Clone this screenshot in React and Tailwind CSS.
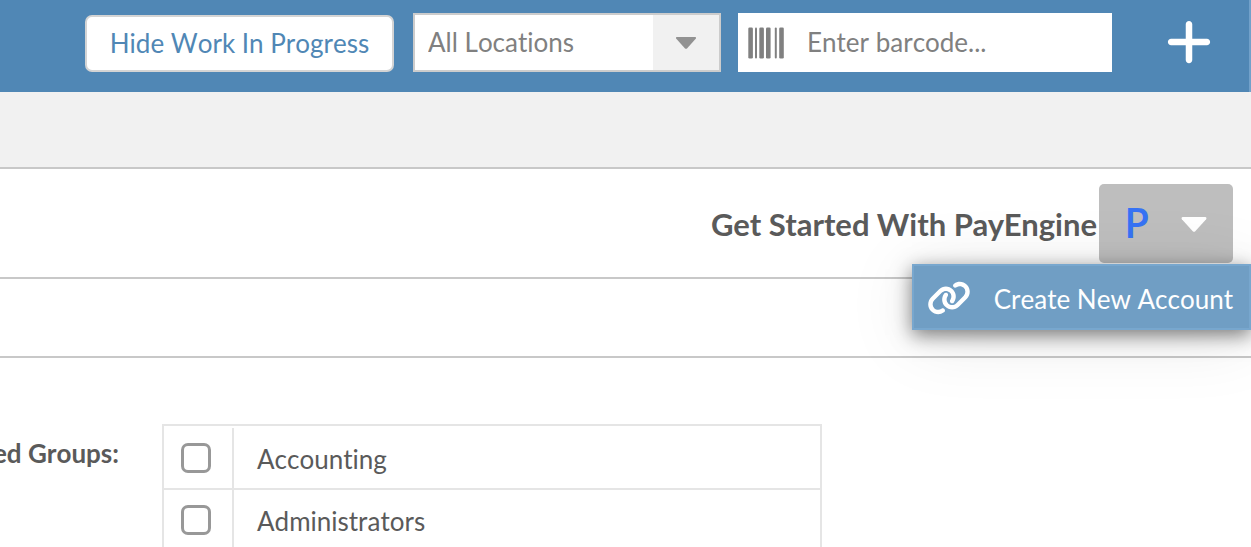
import { useState } from 'react';
import { FaLink, FaPlus } from 'react-icons/fa6';

const locations = ['All Locations'];
const groups = ['Accounting', 'Administrators'];

const Caret = ({ className }) => (
  <svg viewBox="0 0 20 12" className={className} fill="currentColor" aria-hidden="true">
    <path d="M1 0h18c.9 0 1.300 1 .7 1.700L11 11.400c-.6.600-1.400.6-2 0L.3 1.700C-.3 1 .1 0 1 0z" />
  </svg>
);

const BarcodeIcon = ({ className }) => (
  <svg viewBox="0 0 36 32" className={className} fill="currentColor" aria-hidden="true">
    <rect x="0.300" y="0.500" width="4.600" height="31" rx="1.300" />
    <rect x="7" y="0.500" width="2" height="31" rx="1" />
    <rect x="11.300" y="0.500" width="4.600" height="31" rx="1.300" />
    <rect x="18" y="0.500" width="4.600" height="31" rx="1.300" />
    <rect x="26.800" y="0.500" width="2" height="31" rx="1" />
    <rect x="31.200" y="0.500" width="4.600" height="31" rx="1.300" />
  </svg>
);

const TopBar = ({ location, onLocationChange }) => (
  <header className="flex h-[92px] shrink-0 items-start justify-end border-r-2 border-[#72a1ca] bg-[#5087b5] pt-[13px] pr-[34px]">
    <button
      type="button"
      className="mt-[2px] mr-[19px] h-[57px] w-[309px] rounded-[7px] border-2 border-[#d4d4d4] bg-white pb-[2px] text-[#5087b5]"
    >
      Hide Work In Progress
    </button>

    <div className="relative mr-[17px] h-[59px] w-[308px]">
      <select
        aria-label="Location"
        value={location}
        onChange={(event) => onLocationChange(event.target.value)}
        className="h-full w-full appearance-none border-2 border-[#ccc] bg-white pb-[2px] pl-[13px] text-[#808080] outline-none"
      >
        {locations.map((item) => (
          <option key={item}>{item}</option>
        ))}
      </select>
      <span className="pointer-events-none absolute inset-y-[2px] right-[2px] flex w-[66px] items-center justify-center bg-[#f1f1f1] text-[#929292]">
        <Caret className="h-3 w-5" />
      </span>
    </div>

    <label className="flex h-[59px] w-[374px] items-center bg-white px-[10px] text-[#808080]">
      <BarcodeIcon className="h-8 w-9 shrink-0" />
      <input
        type="text"
        aria-label="Barcode"
        placeholder="Enter barcode..."
        className="ml-[23px] h-full w-full min-w-0 pb-[2px] outline-none placeholder:text-[#808080]"
      />
    </label>

    <button type="button" aria-label="Add" className="ml-[51px] flex h-[58px] items-center text-white">
      <FaPlus className="h-[52px] w-[52px]" />
    </button>
  </header>
);

const PayEngineBar = () => (
  <section className="relative flex h-[110px] shrink-0 items-start justify-end border-b-2 border-[#c8c8c8] pt-[15px] pr-[18px]">
    <h2 className="mr-[2px] text-[31px] leading-[80px] font-bold [font-kerning:normal]">Get Started With PayEngine</h2>
    <button
      type="button"
      aria-label="PayEngine menu"
      className="flex h-[79px] w-[134px] items-center rounded-[5px] bg-[#bebebe] pr-[26px] pl-[25px]"
    >
      <span className="pb-1 font-['Open_Sans',sans-serif] text-[42px] leading-[75px] font-semibold text-[#3672f4]">P</span>
      <Caret className="mt-[2px] ml-auto h-[15px] w-[26px] text-white" />
    </button>

    <ul className="absolute top-[95px] right-0 z-10 w-[339px] border-2 border-[#78a7ce] bg-[#709ec4] text-white shadow-[0_5px_18px_rgba(0,0,0,0.5),0_8px_70px_rgba(0,0,0,0.1)]">
      <li>
        <a href="#create" className="flex h-[62px] items-center justify-between pr-4 pl-[13px] whitespace-nowrap">
          <FaLink className="mt-[2px] h-9 w-11" />
          <span className="pt-[3px] leading-8">Create New Account</span>
        </a>
      </li>
    </ul>
  </section>
);

const GroupTable = () => (
  <table className="w-[660px] border-separate border-spacing-0 border-2 border-[#e5e5e5] pt-[2px]">
    <tbody>
      {groups.map((group) => {
        const id = `group-${group.toLowerCase()}`;

        return (
          <tr key={group} className="h-[62px]">
            <td className="w-[70px] border-r-2 border-b-2 border-[#e5e5e5] p-0 pl-[17px]">
              <input
                id={id}
                type="checkbox"
                className="block h-[30px] w-[30px] appearance-none rounded-[7px] border-[3px] border-[#989898] bg-white checked:bg-[#5087b5]"
              />
            </td>
            <td className="border-b-2 border-[#e5e5e5] p-0 pt-[2px] pl-[23px]">
              <label htmlFor={id}>{group}</label>
            </td>
          </tr>
        );
      })}
    </tbody>
  </table>
);

const App = () => {
  const [location, setLocation] = useState(locations[0]);

  return (
    <div className="flex h-screen flex-col overflow-hidden bg-white font-[Lato,sans-serif] text-[26px] leading-8 text-[#5a5a5a] [font-kerning:none] [font-variant-ligatures:none]">
      <TopBar location={location} onLocationChange={setLocation} />
      <div className="h-[77px] shrink-0 border-b-2 border-[#c8c8c8] bg-[#f1f1f1]" />
      <PayEngineBar />
      <div className="h-[79px] shrink-0 border-b-2 border-[#c8c8c8]" />
      <main className="flex items-start pt-[66px]">
        <h3 className="mr-[43px] flex w-[119px] shrink-0 justify-end pt-[13px] font-bold whitespace-nowrap">ed Groups:</h3>
        <GroupTable />
      </main>
    </div>
  );
};

export default App;
